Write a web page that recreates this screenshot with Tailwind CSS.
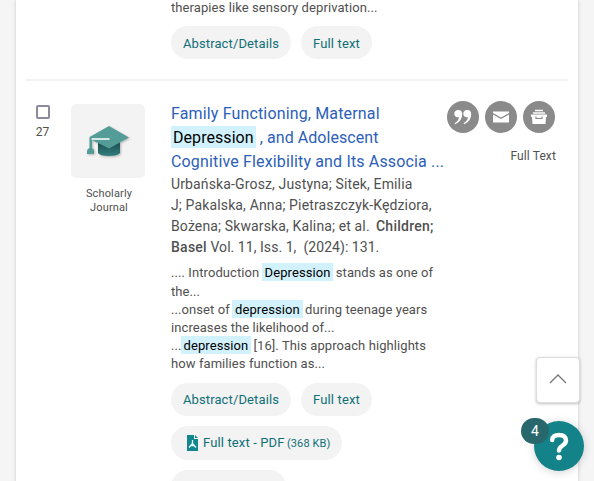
<!DOCTYPE html>
<html lang="en">
<head>
<meta charset="utf-8">
<title>Search results</title>
<script src="https://cdn.jsdelivr.net/npm/@tailwindcss/browser@4"></script>
</head>
<body class="h-[481px] w-[594px] overflow-hidden bg-[#f5f5f6] font-[Roboto,sans-serif] text-[#505050]">
<main class="ml-[15px] h-[481px] w-[564px] overflow-hidden border-x border-[#e4e4e6] bg-white pr-[10px] pl-[10px] shadow-sm">
  <article class="h-[79px] border-b-0 pl-[145px]">
    <p class="h-[26px] pt-px text-[13px] leading-[14px] tracking-[0.09px] whitespace-nowrap">therapies like sensory deprivation...</p>
    <div class="flex gap-[10px]">
      <a class="flex h-[33px] w-[120px] items-center justify-center rounded-full bg-[#f3f3f3] pt-[2px] text-[13px] tracking-[0.13px] text-[#0f6f76]">Abstract/Details</a>
      <a class="flex h-[33px] w-[71px] items-center justify-center rounded-full bg-[#f3f3f3] pt-[2px] text-[13px] tracking-[0.13px] text-[#0f6f76]">Full text</a>
    </div>
  </article>
  <article class="flex border-t-2 border-[#f3f3f3]">
    <div class="w-[34px] pt-[24px]">
      <div class="ml-[10px] h-[14px] w-[14px] rounded-[2px] border-2 border-[#8d8b9b]"></div>
      <div class="mt-[5px] w-[33px] text-center text-[12px] leading-[16px]">27</div>
    </div>
    <div class="ml-[11px] w-[74px] pt-[23px]">
      <div class="h-[74px] rounded-[5px] bg-[#f3f3f3]">
        <svg class="block h-[74px] w-[74px] drop-shadow-[1px_1px_1px_rgba(0,0,0,0.25)]" viewBox="0 0 74 74">
          <defs><linearGradient id="cap" x1="0" y1="0" x2="0" y2="1"><stop offset="0.300" stop-color="#1f5558"/><stop offset="1" stop-color="#34807f"/></linearGradient></defs>
          <path d="M27 36V49Q29 52 38 52T49 49V36Z" fill="url(#cap)"/>
          <path d="M38 22 58 33.500 38 44.500 21 36V44Q23 45 23 47V50H16V47Q16 45 18.500 44V33Z" fill="#539c98"/>
          <path d="M20.500 35H38.500" stroke="#fff" stroke-width="1.500"/>
        </svg>
      </div>
      <p class="mt-[9px] w-[76px] text-center text-[11px] leading-[14px] tracking-[0.15px]">Scholarly<br>Journal</p>
    </div>
    <div class="ml-[26px] w-[276px] pt-[21px] whitespace-nowrap">
      <h2 class="text-[16px] leading-[24px] tracking-[0.15px] text-[#2b60b8]">Family Functioning, Maternal<br><span class="tracking-[0.06px]"><mark class="bg-[#d1f2fc] px-[2px] pt-[2px] pb-px text-black">Depression</mark> , and Adolescent</span><br>Cognitive Flexibility and Its Associa ...</h2>
      <p class="text-[14px] leading-[21px] tracking-[0.14px]">Urbańska-Grosz, Justyna; Sitek, Emilia<br>J; Pakalska, Anna; Pietraszczyk-Kędziora,<br>Bożena; Skwarska, Kalina; et al. <span class="-ml-px">&nbsp;</span><span class="font-medium tracking-[0.25px]">Children;</span><br><span class="font-medium tracking-[0.25px]">Basel</span><span class="tracking-[0.05px]"> Vol. 11, Iss. 1,&nbsp; (2024): 131.</span></p>
      <div class="mt-[6px] text-[13px] leading-[18px] tracking-[0.08px]">
        <p><span class="mb-px block">.... Introduction <mark class="-mx-px bg-[#d1f2fc] px-[3px] pt-[2px] pb-px text-black">Depression</mark> stands as one of</span>the...</p>
        <p>...onset of <mark class="-mx-px bg-[#d1f2fc] px-[3px] pt-[2px] pb-px text-black">depression</mark> during teenage years<br>increases the likelihood of...</p>
        <p>...<mark class="-mx-px bg-[#d1f2fc] px-[3px] pt-[2px] pb-px text-black">depression</mark> [16]. This approach highlights<br>how families function as...</p>
      </div>
      <div class="mt-[10px] flex flex-wrap gap-[10px] text-[13px] tracking-[0.13px] text-[#0f6f76]">
        <a class="flex h-[33px] w-[120px] items-center justify-center rounded-full bg-[#f3f3f3]">Abstract/Details</a>
        <a class="flex h-[33px] w-[71px] items-center justify-center rounded-full bg-[#f3f3f3]">Full text</a>
        <a class="flex h-[34px] w-[171px] items-center rounded-full bg-[#f3f3f3] pl-[16px]">
          <svg class="-mt-px mr-[5px] h-[16px] w-[11px]" viewBox="0 0 11 16"><path d="M0 0H7V4H11V16H0Z" fill="#128790"/><path d="M8 0 11 3H8Z" fill="#128790"/><path d="M5.500 5V8.500L2 12.500M5.500 8.500 9 12.500M3.500 10.500H7.500" fill="none" stroke="#e8f4f4" stroke-width="1.300"/></svg>
          <span>Full text - PDF <span class="-ml-px text-[11px]">(368 KB)</span></span>
        </a>
        <a class="h-[33px] w-[115px] rounded-full bg-[#f3f3f3]"></a>
      </div>
    </div>
    <div class="w-[109px] pt-[20px]">
      <div class="flex gap-[6px]">
        <a class="flex size-8 items-center justify-center rounded-full bg-[#8a8a8a]"><svg class="size-8" viewBox="0 0 32 32" fill="#fff"><path id="quote" d="M11.500 9A3.700 3.700 0 1 0 12 16.200Q11.500 20 7.500 22.200L8.300 23.200Q15.200 20 15.200 13.200Q15 9 11.500 9Z"/><use href="#quote" x="9"/></svg></a>
        <a class="size-8 rounded-full bg-[#8a8a8a]"><svg viewBox="0 0 32 32" fill="#fff"><path d="M8 10.500H24V12L16 16.500 8 12ZM8 13.500 16 18 24 13.500V21.500H8Z"/></svg></a>
        <a class="size-8 rounded-full bg-[#8a8a8a]"><svg viewBox="0 0 32 32"><path d="M12 9.500H20M10 12H22" stroke="#fff" stroke-width="1.500"/><path d="M8 13.500H24V16H23L22.500 23H9.500L9 16H8Z" fill="#fff"/><path d="M13 15.500V17.500H19V15.500" fill="none" stroke="#8a8a8a" stroke-width="1.200"/></svg></a>
      </div>
      <p class="mt-[15px] w-[109px] text-right text-[12px] leading-[16px] tracking-[0.12px] whitespace-nowrap">Full Text</p>
    </div>
  </article>
</main>
<button class="absolute top-[357px] left-[536px] flex h-[46px] w-[44px] items-center justify-center rounded-[4px] border border-[#ddd] bg-white shadow-[0_1px_3px_rgba(0,0,0,0.25)]"><svg class="-mt-[3px] h-[12px] w-[20px]" viewBox="0 0 20 12"><path d="M2 10 10 2 18 10" fill="none" stroke="#777" stroke-width="1.300"/></svg></button>
<button class="absolute top-[421px] left-[534px] size-[50px] rounded-full bg-[#138289] shadow-[0_1px_9px_rgba(0,0,0,0.18)]"><svg viewBox="0 0 50 50"><path d="M18.200 19Q18.200 14 25 14T32 19.500C32 25 25.300 24 25 29.500" fill="none" stroke="#fff" stroke-width="4.400" stroke-linecap="round"/><circle cx="25" cy="36.500" r="2.800" fill="#fff"/></svg></button>
<span class="absolute top-[418px] left-[521px] flex h-[26px] w-[28px] items-center justify-center rounded-full bg-[#28686d] text-[14px] text-white">4</span>
</body>
</html>
